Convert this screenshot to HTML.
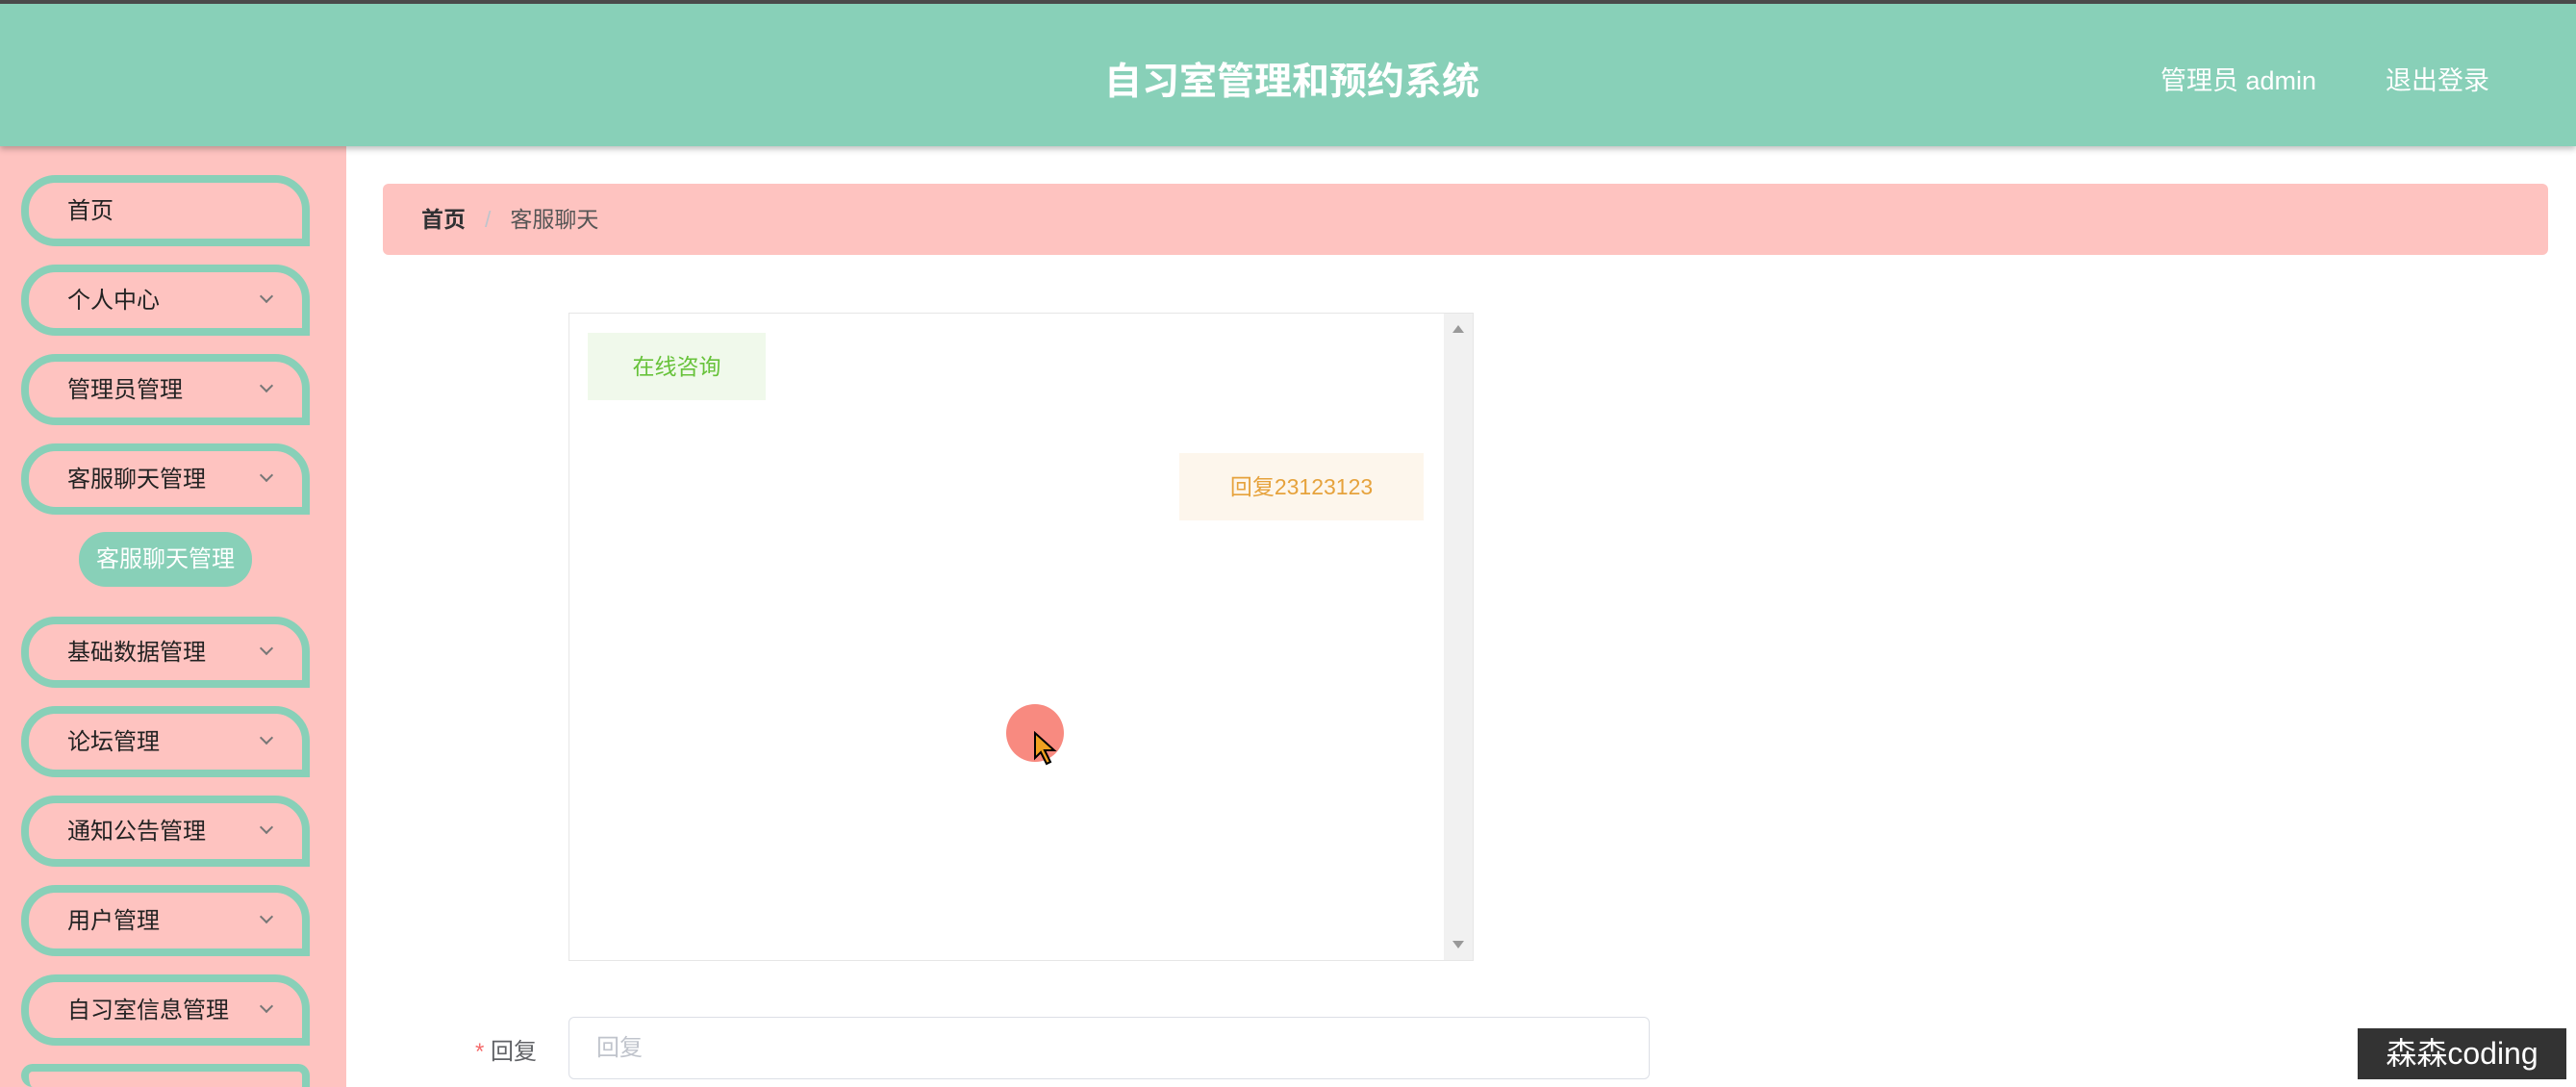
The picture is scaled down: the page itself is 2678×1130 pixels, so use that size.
<!DOCTYPE html>
<html><head><meta charset="utf-8"><style>
*{margin:0;padding:0;box-sizing:border-box}
html,body{width:2678px;height:1130px;overflow:hidden}
body{background:#fff;font-family:"Liberation Sans","Noto Sans CJK SC",sans-serif;position:relative}
.hdr{position:absolute;left:0;top:0;width:2678px;height:152px;background:#88d0b8;border-top:4px solid #4a4a4a;box-shadow:0 3px 6px rgba(0,0,0,.25);z-index:2}
.title{position:absolute;left:0;width:2678px;top:50px;text-align:center;font-size:39px;font-weight:bold;color:#fff;padding-left:8px}
.ru{position:absolute;top:58px;font-size:27px;color:#fff}
.side{position:absolute;left:0;top:152px;width:360px;height:978px;background:#fec3c0}
.mi{position:absolute;left:22px;width:300px;height:74px;border:8px solid #88d0b8;border-radius:36px 36px 0 36px;font-size:24px;color:#222;padding-left:40px;line-height:60px;overflow:hidden}
.mi .ar{position:absolute;right:32px;top:20px;width:10px;height:10px;border-right:2px solid #777;border-bottom:2px solid #777;transform:rotate(45deg)}
.sub{position:absolute;left:82px;top:553px;width:180px;height:57px;border-radius:28px;background:#88d0b8;color:#fff;font-size:24px;text-align:center;line-height:57px}
.bc{position:absolute;left:398px;top:191px;width:2251px;height:74px;background:#fec3c0;border-radius:6px;font-size:23px;line-height:74px;padding-left:40px;color:#555}
.chat{position:absolute;left:591px;top:325px;width:941px;height:674px;border:1px solid #e6e6e6;background:#fff}
.sb{position:absolute;right:0;top:0;width:30px;height:100%;background:#f1f1f1}
.b1{position:absolute;left:19px;top:20px;width:185px;height:70px;background:#f0f9eb;color:#67c23a;font-size:23px;text-align:center;line-height:70px}
.b2{position:absolute;left:634px;top:145px;width:254px;height:70px;background:#fdf6ec;color:#e6a23c;font-size:23px;text-align:center;line-height:70px}
</style></head><body>
<div class="hdr"><div class="title">自习室管理和预约系统</div><div class="ru" style="left:2246px">管理员 admin</div><div class="ru" style="left:2480px">退出登录</div></div>
<div class="side"></div>
<div class="mi" style="top:182px">首页</div>
<div class="mi" style="top:275px">个人中心<span class="ar"></span></div>
<div class="mi" style="top:368px">管理员管理<span class="ar"></span></div>
<div class="mi" style="top:461px">客服聊天管理<span class="ar"></span></div>
<div class="sub">客服聊天管理</div>
<div class="mi" style="top:641px">基础数据管理<span class="ar"></span></div>
<div class="mi" style="top:734px">论坛管理<span class="ar"></span></div>
<div class="mi" style="top:827px">通知公告管理<span class="ar"></span></div>
<div class="mi" style="top:920px">用户管理<span class="ar"></span></div>
<div class="mi" style="top:1013px">自习室信息管理<span class="ar"></span></div>
<div class="mi" style="top:1106px;height:24px;border-bottom:0"></div>
<div class="bc"><b style="color:#303133">首页</b><span style="color:#c0c4cc;margin:0 20px">/</span>客服聊天</div>
<div class="chat"><div class="b1">在线咨询</div><div class="b2">回复23123123</div><div class="sb"><div style="position:absolute;left:9px;top:12px;border:6px solid transparent;border-bottom:8px solid #999;border-top:0"></div><div style="position:absolute;left:9px;bottom:12px;border:6px solid transparent;border-top:8px solid #999;border-bottom:0"></div></div></div>
<div style="position:absolute;left:1046px;top:732px;width:60px;height:60px;border-radius:50%;background:#f88a80"></div>
<svg style="position:absolute;left:1074px;top:760px" width="30" height="36" viewBox="0 0 15 18"><path d="M1 1 L1 14 L4 11 L7 17 L9 16 L6 10 L11 10 Z" fill="#f0a020" stroke="#000" stroke-width="1"/></svg>
<div style="position:absolute;left:494px;top:1073px;font-size:24px;color:#606266"><span style="color:#f56c6c">*</span> 回复</div>
<div style="position:absolute;left:591px;top:1057px;width:1124px;height:65px;border:1px solid #dcdfe6;border-radius:6px;font-size:24px;color:#c0c4cc;line-height:63px;padding-left:28px">回复</div>
<div style="position:absolute;left:2451px;top:1069px;width:217px;height:53px;background:#333;color:#fff;font-size:32px;line-height:53px;text-align:center">森森coding</div>
</body></html>
